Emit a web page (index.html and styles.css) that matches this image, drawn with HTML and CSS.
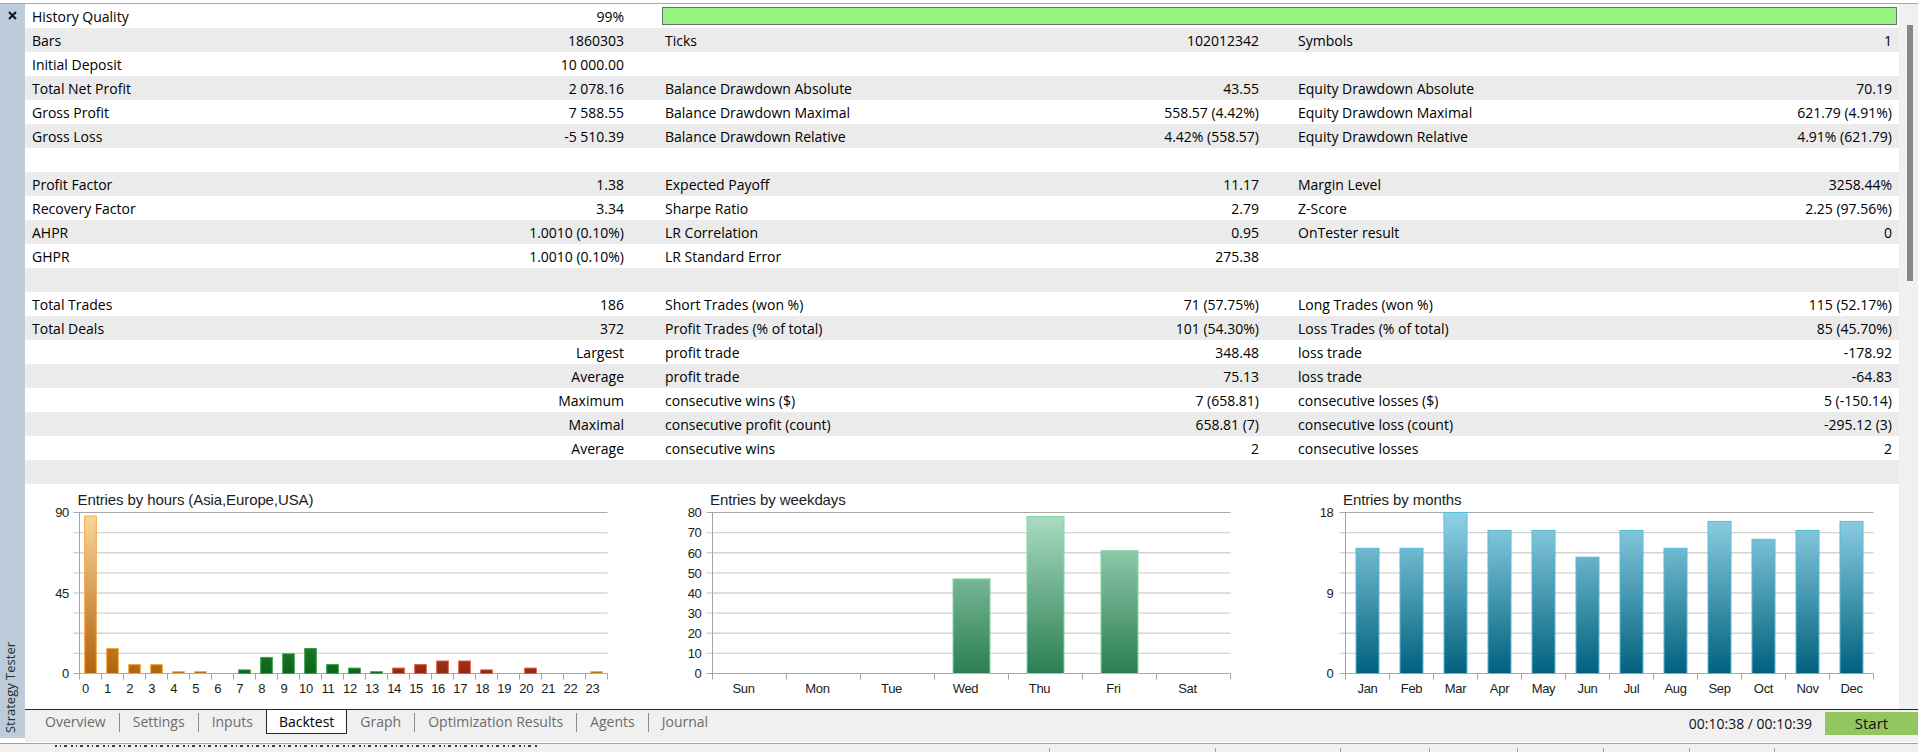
FILE: index.html
```html
<!DOCTYPE html>
<html lang="en">
<head>
<meta charset="utf-8">
<title>Strategy Tester – Backtest</title>
<link rel="stylesheet" href="styles.css">
</head>
<body>
<div class="top-rule"></div>
<div class="panel">
  <aside class="sidebar">
    <svg class="close" width="9" height="9" viewBox="0 0 9 9"><path d="M1 1L8 8M8 1L1 8"/></svg>
    <div class="side-title">Strategy Tester</div>
  </aside>
  <div class="main">
    <div class="view">
      <div class="report">
        <div class="table">
          <div class="row"><div class="cell"><span>History Quality</span><span>99%</span></div><div class="quality"></div></div>
          <div class="row"><div class="cell"><span>Bars</span><span>1860303</span></div><div class="cell"><span>Ticks</span><span>102012342</span></div><div class="cell"><span>Symbols</span><span>1</span></div></div>
          <div class="row"><div class="cell"><span>Initial Deposit</span><span>10 000.00</span></div><div class="cell"></div><div class="cell"></div></div>
          <div class="row"><div class="cell"><span>Total Net Profit</span><span>2 078.16</span></div><div class="cell"><span>Balance Drawdown Absolute</span><span>43.55</span></div><div class="cell"><span>Equity Drawdown Absolute</span><span>70.19</span></div></div>
          <div class="row"><div class="cell"><span>Gross Profit</span><span>7 588.55</span></div><div class="cell"><span>Balance Drawdown Maximal</span><span>558.57 (4.42%)</span></div><div class="cell"><span>Equity Drawdown Maximal</span><span>621.79 (4.91%)</span></div></div>
          <div class="row"><div class="cell"><span>Gross Loss</span><span>-5 510.39</span></div><div class="cell"><span>Balance Drawdown Relative</span><span>4.42% (558.57)</span></div><div class="cell"><span>Equity Drawdown Relative</span><span>4.91% (621.79)</span></div></div>
          <div class="row"><div class="cell"></div><div class="cell"></div><div class="cell"></div></div>
          <div class="row"><div class="cell"><span>Profit Factor</span><span>1.38</span></div><div class="cell"><span>Expected Payoff</span><span>11.17</span></div><div class="cell"><span>Margin Level</span><span>3258.44%</span></div></div>
          <div class="row"><div class="cell"><span>Recovery Factor</span><span>3.34</span></div><div class="cell"><span>Sharpe Ratio</span><span>2.79</span></div><div class="cell"><span>Z-Score</span><span>2.25 (97.56%)</span></div></div>
          <div class="row"><div class="cell"><span>AHPR</span><span>1.0010 (0.10%)</span></div><div class="cell"><span>LR Correlation</span><span>0.95</span></div><div class="cell"><span>OnTester result</span><span>0</span></div></div>
          <div class="row"><div class="cell"><span>GHPR</span><span>1.0010 (0.10%)</span></div><div class="cell"><span>LR Standard Error</span><span>275.38</span></div><div class="cell"></div></div>
          <div class="row"><div class="cell"></div><div class="cell"></div><div class="cell"></div></div>
          <div class="row"><div class="cell"><span>Total Trades</span><span>186</span></div><div class="cell"><span>Short Trades (won %)</span><span>71 (57.75%)</span></div><div class="cell"><span>Long Trades (won %)</span><span>115 (52.17%)</span></div></div>
          <div class="row"><div class="cell"><span>Total Deals</span><span>372</span></div><div class="cell"><span>Profit Trades (% of total)</span><span>101 (54.30%)</span></div><div class="cell"><span>Loss Trades (% of total)</span><span>85 (45.70%)</span></div></div>
          <div class="row"><div class="cell"><span></span><span>Largest</span></div><div class="cell"><span>profit trade</span><span>348.48</span></div><div class="cell"><span>loss trade</span><span>-178.92</span></div></div>
          <div class="row"><div class="cell"><span></span><span>Average</span></div><div class="cell"><span>profit trade</span><span>75.13</span></div><div class="cell"><span>loss trade</span><span>-64.83</span></div></div>
          <div class="row"><div class="cell"><span></span><span>Maximum</span></div><div class="cell"><span>consecutive wins ($)</span><span>7 (658.81)</span></div><div class="cell"><span>consecutive losses ($)</span><span>5 (-150.14)</span></div></div>
          <div class="row"><div class="cell"><span></span><span>Maximal</span></div><div class="cell"><span>consecutive profit (count)</span><span>658.81 (7)</span></div><div class="cell"><span>consecutive loss (count)</span><span>-295.12 (3)</span></div></div>
          <div class="row"><div class="cell"><span></span><span>Average</span></div><div class="cell"><span>consecutive wins</span><span>2</span></div><div class="cell"><span>consecutive losses</span><span>2</span></div></div>
          <div class="row"><div class="cell"></div><div class="cell"></div><div class="cell"></div></div>
        </div>

        <div class="charts">
          <!-- Entries by hours -->
          <svg class="chart" width="634" height="225" viewBox="0 0 634 225">
            <defs>
              <linearGradient id="gOr" gradientUnits="userSpaceOnUse" x1="0" y1="28" x2="0" y2="190"><stop offset="0" stop-color="#fdd89e"/><stop offset="1" stop-color="#b0620a"/></linearGradient>
              <linearGradient id="gGr" gradientUnits="userSpaceOnUse" x1="0" y1="28" x2="0" y2="190"><stop offset="0" stop-color="#7fd486"/><stop offset="1" stop-color="#0b6318"/></linearGradient>
              <linearGradient id="gRd" gradientUnits="userSpaceOnUse" x1="0" y1="28" x2="0" y2="190"><stop offset="0" stop-color="#f4a58e"/><stop offset="1" stop-color="#96250f"/></linearGradient>
            </defs>
            <text class="ct" x="52.5" y="20.5">Entries by hours (Asia,Europe,USA)</text>
            <path class="grid" d="M48.5 48.6H582.5M48.5 68.75H582.5M48.5 88.9H582.5M48.5 109H582.5M48.5 129.1H582.5M48.5 149.25H582.5M48.5 169.4H582.5"/>
            <path class="edge" d="M48.5 28.5H582.5M48.5 189.5H582.5"/>
            <path class="axis" d="M54.5 28.5V195.5M76.5 189.5V195.5M98.5 189.5V195.5M120.5 189.5V195.5M142.5 189.5V195.5M164.5 189.5V195.5M186.5 189.5V195.5M208.5 189.5V195.5M230.5 189.5V195.5M252.5 189.5V195.5M274.5 189.5V195.5M296.5 189.5V195.5M318.5 189.5V195.5M340.5 189.5V195.5M362.5 189.5V195.5M384.5 189.5V195.5M406.5 189.5V195.5M428.5 189.5V195.5M450.5 189.5V195.5M472.5 189.5V195.5M494.5 189.5V195.5M516.5 189.5V195.5M538.5 189.5V195.5M560.5 189.5V195.5M582.5 189.5V195.5"/>
            <g class="b-or">
              <rect x="59.7" y="32.1" width="11.6" height="157.4"/>
              <rect x="81.7" y="164.5" width="11.6" height="25"/>
              <rect x="103.7" y="180.6" width="11.6" height="8.9"/>
              <rect x="125.7" y="180.6" width="11.6" height="8.9"/>
              <rect x="147.7" y="187.7" width="11.6" height="1.8"/>
              <rect x="169.7" y="187.7" width="11.6" height="1.8"/>
              <rect x="565.7" y="187.7" width="11.6" height="1.8"/>
            </g>
            <g class="b-gr">
              <rect x="213.7" y="185.9" width="11.6" height="3.6"/>
              <rect x="235.7" y="173.4" width="11.6" height="16.1"/>
              <rect x="257.7" y="169.8" width="11.6" height="19.7"/>
              <rect x="279.7" y="164.5" width="11.6" height="25"/>
              <rect x="301.7" y="180.6" width="11.6" height="8.9"/>
              <rect x="323.7" y="184.1" width="11.6" height="5.4"/>
              <rect x="345.7" y="187.7" width="11.6" height="1.8"/>
            </g>
            <g class="b-rd">
              <rect x="367.7" y="184.1" width="11.6" height="5.4"/>
              <rect x="389.7" y="180.6" width="11.6" height="8.9"/>
              <rect x="411.7" y="177" width="11.6" height="12.5"/>
              <rect x="433.7" y="177" width="11.6" height="12.5"/>
              <rect x="455.7" y="185.9" width="11.6" height="3.6"/>
              <rect x="499.7" y="184.1" width="11.6" height="5.4"/>
            </g>
            <g class="yl">
              <text x="44" y="33.3">90</text>
              <text x="44" y="113.8">45</text>
              <text x="44" y="194.3">0</text>
            </g>
            <g class="xl">
              <text x="60.5" y="208.8">0</text><text x="82.5" y="208.8">1</text><text x="104.6" y="208.8">2</text><text x="126.6" y="208.8">3</text><text x="148.7" y="208.8">4</text><text x="170.7" y="208.8">5</text><text x="192.7" y="208.8">6</text><text x="214.8" y="208.8">7</text><text x="236.8" y="208.8">8</text><text x="258.9" y="208.8">9</text><text x="280.9" y="208.8">10</text><text x="302.9" y="208.8">11</text><text x="325" y="208.8">12</text><text x="347" y="208.8">13</text><text x="369.1" y="208.8">14</text><text x="391.1" y="208.8">15</text><text x="413.1" y="208.8">16</text><text x="435.2" y="208.8">17</text><text x="457.2" y="208.8">18</text><text x="479.3" y="208.8">19</text><text x="501.3" y="208.8">20</text><text x="523.3" y="208.8">21</text><text x="545.4" y="208.8">22</text><text x="567.4" y="208.8">23</text>
            </g>
          </svg>

          <!-- Entries by weekdays -->
          <svg class="chart" width="633" height="225" viewBox="0 0 633 225">
            <defs>
              <linearGradient id="gWd" gradientUnits="userSpaceOnUse" x1="0" y1="28" x2="0" y2="190"><stop offset="0" stop-color="#acdfc4"/><stop offset="1" stop-color="#2a7e52"/></linearGradient>
            </defs>
            <text class="ct" x="51" y="20.5">Entries by weekdays</text>
            <path class="grid" d="M47.5 48.6H571.5M47.5 68.75H571.5M47.5 88.9H571.5M47.5 109H571.5M47.5 129.1H571.5M47.5 149.25H571.5M47.5 169.4H571.5"/>
            <path class="edge" d="M47.5 28.5H571.5M47.5 189.5H571.5"/>
            <path class="axis" d="M53.5 28.5V195.5M127.5 189.5V195.5M201.5 189.5V195.5M275.5 189.5V195.5M349.5 189.5V195.5M423.5 189.5V195.5M497.5 189.5V195.5M571.5 189.5V195.5"/>
            <g class="b-wd">
              <rect x="294" y="94.9" width="37" height="94.6"/>
              <rect x="368" y="32.5" width="37" height="157"/>
              <rect x="442" y="66.7" width="37" height="122.8"/>
            </g>
            <g class="yl">
              <text x="42.5" y="33.3">80</text><text x="42.5" y="53.4">70</text><text x="42.5" y="73.5">60</text><text x="42.5" y="93.7">50</text><text x="42.5" y="113.8">40</text><text x="42.5" y="133.9">30</text><text x="42.5" y="154">20</text><text x="42.5" y="174.2">10</text><text x="42.5" y="194.3">0</text>
            </g>
            <g class="xl">
              <text x="84.5" y="208.8">Sun</text><text x="158.5" y="208.8">Mon</text><text x="232.5" y="208.8">Tue</text><text x="306.5" y="208.8">Wed</text><text x="380.5" y="208.8">Thu</text><text x="454.5" y="208.8">Fri</text><text x="528.5" y="208.8">Sat</text>
            </g>
          </svg>

          <!-- Entries by months -->
          <svg class="chart" width="607" height="225" viewBox="0 0 607 225">
            <defs>
              <linearGradient id="gMo" gradientUnits="userSpaceOnUse" x1="0" y1="28" x2="0" y2="190"><stop offset="0" stop-color="#92d3e6"/><stop offset="1" stop-color="#00607d"/></linearGradient>
            </defs>
            <text class="ct" x="51" y="20.5">Entries by months</text>
            <path class="grid" d="M47.5 48.6H581.5M47.5 68.75H581.5M47.5 88.9H581.5M47.5 109H581.5M47.5 129.1H581.5M47.5 149.25H581.5M47.5 169.4H581.5"/>
            <path class="edge" d="M47.5 28.5H581.5M47.5 189.5H581.5"/>
            <path class="axis" d="M53.5 28.5V195.5M97.5 189.5V195.5M141.5 189.5V195.5M185.5 189.5V195.5M229.5 189.5V195.5M273.5 189.5V195.5M317.5 189.5V195.5M361.5 189.5V195.5M405.5 189.5V195.5M449.5 189.5V195.5M493.5 189.5V195.5M537.5 189.5V195.5M581.5 189.5V195.5"/>
            <g class="b-mo">
              <rect x="64" y="64.3" width="23" height="125.2"/>
              <rect x="108" y="64.3" width="23" height="125.2"/>
              <rect x="152" y="28.5" width="23" height="161"/>
              <rect x="196" y="46.4" width="23" height="143.1"/>
              <rect x="240" y="46.4" width="23" height="143.1"/>
              <rect x="284" y="73.2" width="23" height="116.3"/>
              <rect x="328" y="46.4" width="23" height="143.1"/>
              <rect x="372" y="64.3" width="23" height="125.2"/>
              <rect x="416" y="37.4" width="23" height="152.1"/>
              <rect x="460" y="55.3" width="23" height="134.2"/>
              <rect x="504" y="46.4" width="23" height="143.1"/>
              <rect x="548" y="37.4" width="23" height="152.1"/>
            </g>
            <g class="yl">
              <text x="41.5" y="33.3">18</text><text x="41.5" y="113.8">9</text><text x="41.5" y="194.3">0</text>
            </g>
            <g class="xl">
              <text x="75.5" y="208.8">Jan</text><text x="119.5" y="208.8">Feb</text><text x="163.5" y="208.8">Mar</text><text x="207.5" y="208.8">Apr</text><text x="251.5" y="208.8">May</text><text x="295.5" y="208.8">Jun</text><text x="339.5" y="208.8">Jul</text><text x="383.5" y="208.8">Aug</text><text x="427.5" y="208.8">Sep</text><text x="471.5" y="208.8">Oct</text><text x="515.5" y="208.8">Nov</text><text x="559.5" y="208.8">Dec</text>
            </g>
          </svg>
        </div>
      </div>
      <div class="vscroll"><div class="thumb"></div></div>
    </div>
    <div class="tabbar">
      <nav class="tabs">
        <span class="tab">Overview</span>
        <span class="sep"></span>
        <span class="tab">Settings</span>
        <span class="sep"></span>
        <span class="tab">Inputs</span>
        <span class="tab active">Backtest</span>
        <span class="tab">Graph</span>
        <span class="sep"></span>
        <span class="tab">Optimization Results</span>
        <span class="sep"></span>
        <span class="tab">Agents</span>
        <span class="sep"></span>
        <span class="tab">Journal</span>
      </nav>
      <span class="clock">00:10:38 / 00:10:39</span>
      <span class="start">Start</span>
    </div>
  </div>
</div>
<div class="status">
  <div class="scell first"><div class="frag"></div></div>
  <div class="scell w166"></div>
  <div class="scell w125"></div>
  <div class="scell w89"></div>
  <div class="scell w88"></div>
  <div class="scell w86"></div>
  <div class="scell w86"></div>
  <div class="scell w85"></div>
  <div class="scell w144"></div>
</div>
</body>
</html>
```
FILE: styles.css
```css
* { box-sizing: border-box; }
html, body { margin: 0; padding: 0; }
body {
  width: 1918px;
  height: 752px;
  overflow: hidden;
  background: #fff;
  font-family: "Open Sans", "Noto Sans", "Segoe UI", sans-serif;
  font-size: 14px;
  color: #000;
}

.top-rule {
  height: 4px;
  border-bottom: 1px solid #a7a7a7;
}

.panel {
  display: flex;
  height: 738px;
}

.sidebar {
  width: 25px;
  height: 734px;
  flex: none;
  background: #bdccda;
  display: flex;
  flex-direction: column;
  justify-content: space-between;
  align-items: center;
}
.close {
  margin-top: 7px;
  stroke: #151515;
  stroke-width: 2;
  fill: none;
}
.side-title {
  writing-mode: vertical-rl;
  transform: rotate(180deg);
  font-size: 13px;
  line-height: 17px;
  color: #2a2a2a;
  margin-bottom: 5px;
  margin-right: 4px;
  white-space: nowrap;
}

.main {
  flex: 1;
  min-width: 0;
  display: flex;
  flex-direction: column;
}

.view {
  display: flex;
  height: 705px;
}

.report {
  width: 1874px;
  flex: none;
}

.row {
  display: grid;
  grid-template-columns: 633px 633px 608px;
  height: 24px;
}
.row:nth-child(even) { background: #ebebeb; }

.cell {
  display: flex;
  justify-content: space-between;
  align-items: center;
  padding-left: 7px;
  padding-right: 34px;
  padding-top: 1px;
  line-height: 23px;
  white-space: nowrap;
}
.cell:nth-child(2) { padding-right: 32px; }
.cell:nth-child(3) { padding-right: 7px; }

.quality {
  grid-column: 2 / 4;
  margin: 3px 2px 3px 4px;
  border: 1px solid #6d6d6d;
  background: #98f580;
}

.charts {
  display: grid;
  grid-template-columns: 634px 633px 607px;
  height: 225px;
}
.chart { display: block; }
.chart text {
  font-family: "Liberation Sans", Arial, sans-serif;
  fill: #1c1c1c;
}
.chart .ct { font-size: 15px; letter-spacing: -0.1px; }
.chart .yl text { font-size: 13px; text-anchor: end; letter-spacing: -0.3px; }
.chart .xl text { font-size: 13px; text-anchor: middle; letter-spacing: -0.3px; }
.grid { stroke: #d4d4d4; stroke-width: 1.4; fill: none; }
.edge { stroke: #a9a9a9; stroke-width: 1.2; fill: none; }
.axis { stroke: #a3a3a3; stroke-width: 1; fill: none; }

.b-or rect { fill: url(#gOr); stroke: #f5a53c; stroke-width: 1; }
.b-gr rect { fill: url(#gGr); stroke: #39a047; stroke-width: 1; }
.b-rd rect { fill: url(#gRd); stroke: #dc5c3e; stroke-width: 1; }
.b-wd rect { fill: url(#gWd); stroke: #86d6a8; stroke-width: 1; }
.b-mo rect { fill: url(#gMo); stroke: #56bbda; stroke-width: 1; }

.vscroll {
  width: 19px;
  flex: none;
  background: #f0f0f0;
}
.thumb {
  margin: 21px 0 0 8px;
  width: 6px;
  height: 256px;
  background: #878787;
}

.tabbar {
  height: 33px;
  border-top: 1px solid #262626;
  background: #f0f0f0;
  display: flex;
  align-items: flex-start;
}
.tabs {
  flex: 1;
  display: flex;
  align-items: flex-start;
  margin-left: 7px;
}
.tab {
  height: 24px;
  line-height: 24px;
  padding: 0 13px;
  color: #6c6c6c;
  white-space: nowrap;
}
.tab.active {
  background: #fff;
  color: #000;
  border: 1px solid #262626;
  border-top: 0;
  padding: 0 12px;
  line-height: 23px;
}
.sep {
  width: 1px;
  height: 19px;
  margin-top: 3px;
  background: #8c8c8c;
}
.clock {
  margin-top: 2px;
  margin-right: 13px;
  line-height: 23px;
  color: #111;
}
.start {
  width: 93px;
  height: 23px;
  margin-top: 2px;
  background: #92c65e;
  line-height: 23px;
  text-align: center;
  font-size: 15px;
  color: #111;
}

.status {
  margin-top: 1px;
  height: 9px;
  border-top: 1px solid #a0a0a0;
  background: #f0f0f0;
  display: flex;
}
.scell {
  flex: none;
  margin-top: 4px;
  border-left: 1px solid #a0a0a0;
}
.scell.first {
  flex: 1;
  margin-top: 0;
  border-left: 0;
}
.frag {
  margin: 1px 0 0 55px;
  width: 485px;
  height: 2px;
  background: repeating-linear-gradient(90deg, #3a3a3a 0 2px, transparent 2px 5px, #3a3a3a 5px 6px, transparent 6px 9px, #3a3a3a 9px 12px, transparent 12px 16px);
}
.w166 { width: 166px; }
.w125 { width: 125px; }
.w89 { width: 89px; }
.w88 { width: 88px; }
.w86 { width: 86px; }
.w85 { width: 85px; }
.w144 { width: 144px; }
```
